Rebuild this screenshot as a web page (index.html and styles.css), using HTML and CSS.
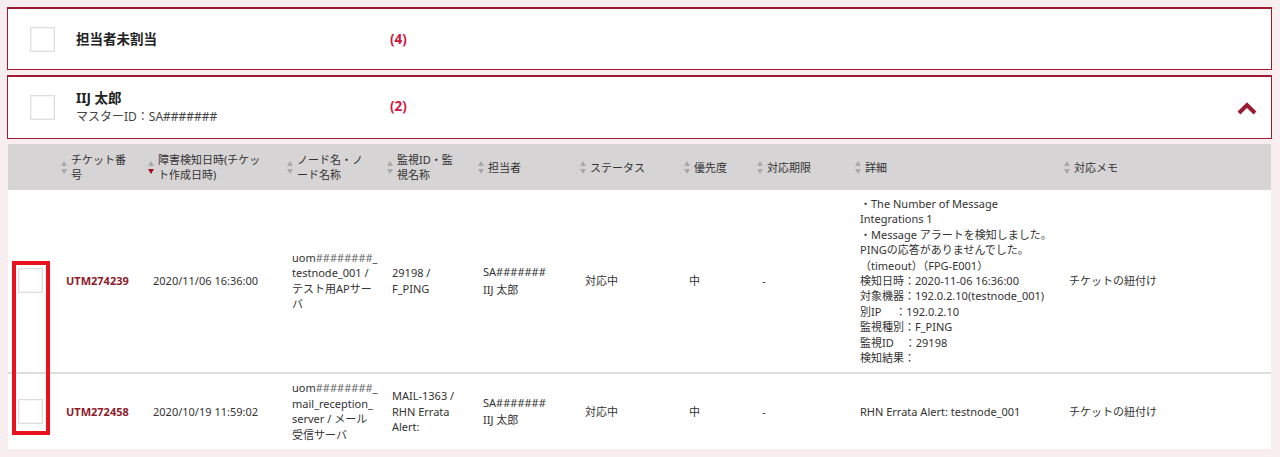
FILE: index.html
```html
<!DOCTYPE html>
<html lang="ja">
<head>
	<meta charset="UTF-8">
	<title>チケット一覧</title>
	<link rel="stylesheet" href="styles.css">
</head>
<body>
	<div class="page">
		<div class="group">
			<span class="check"></span>
			<div class="group-name"><b>担当者未割当</b></div>
			<span class="count">(4)</span>
		</div>
		<div class="group open">
			<span class="check"></span>
			<div class="group-name">
				<b>IIJ 太郎</b>
				<small>マスターID：SA#######</small>
			</div>
			<span class="count">(2)</span>
			<svg class="toggle" width="20" height="14" viewBox="0 0 20 14"><polyline points="2,12 10,4 18,12" fill="none" stroke="#9b1b30" stroke-width="4"/></svg>
		</div>

		<div class="list">
			<table class="tickets">
				<colgroup>
					<col style="width:53px"><col style="width:87px"><col style="width:139px"><col style="width:100px">
					<col style="width:91px"><col style="width:102px"><col style="width:104px"><col style="width:73px">
					<col style="width:98px"><col style="width:209px"><col style="width:207px">
				</colgroup>
				<thead>
					<tr>
						<th></th>
						<th><div class="th"><span class="sort"></span><span>チケット番<br>号</span></div></th>
						<th><div class="th"><span class="sort desc"></span><span>障害検知日時(チケッ<br>ト作成日時)</span></div></th>
						<th><div class="th"><span class="sort"></span><span>ノード名・ノ<br>ード名称</span></div></th>
						<th><div class="th"><span class="sort"></span><span>監視ID・監<br>視名称</span></div></th>
						<th><div class="th"><span class="sort"></span><span>担当者</span></div></th>
						<th><div class="th"><span class="sort"></span><span>ステータス</span></div></th>
						<th><div class="th"><span class="sort"></span><span>優先度</span></div></th>
						<th><div class="th"><span class="sort"></span><span>対応期限</span></div></th>
						<th><div class="th"><span class="sort"></span><span>詳細</span></div></th>
						<th><div class="th"><span class="sort"></span><span>対応メモ</span></div></th>
					</tr>
				</thead>
				<tbody>
					<tr>
						<td class="cb"><span class="check"></span></td>
						<td><a class="ticket-no">UTM274239</a></td>
						<td>2020/11/06 16:36:00</td>
						<td>uom<i>########</i>_<br>testnode_001 /<br>テスト用APサー<br>バ</td>
						<td>29198 /<br>F_PING</td>
						<td class="owner">SA#######<br>IIJ 太郎</td>
						<td>対応中</td>
						<td>中</td>
						<td>-</td>
						<td>・The Number of Message<br>Integrations 1<br>・Message アラートを検知しました。<br>PINGの応答がありませんでした。<br>（timeout）（FPG-E001）<br>検知日時：2020-11-06 16:36:00<br>対象機器：192.0.2.10(testnode_001)<br>別IP　 ：192.0.2.10<br>監視種別：F_PING<br>監視ID　：29198<br>検知結果：</td>
						<td>チケットの紐付け</td>
					</tr>
					<tr>
						<td class="cb"><span class="check"></span></td>
						<td><a class="ticket-no">UTM272458</a></td>
						<td>2020/10/19 11:59:02</td>
						<td>uom<i>########</i>_<br>mail_reception_<br>server / メール<br>受信サーバ</td>
						<td>MAIL-1363 /<br>RHN Errata<br>Alert:</td>
						<td class="owner">SA#######<br>IIJ 太郎</td>
						<td>対応中</td>
						<td>中</td>
						<td>-</td>
						<td>RHN Errata Alert: testnode_001</td>
						<td>チケットの紐付け</td>
					</tr>
				</tbody>
			</table>
			<div class="mark"></div>
		</div>
	</div>
</body>
</html>
```

FILE: styles.css
```css
html, body {margin: 0; padding: 0;}
body {background: #f8eef0; font-family: "Noto Sans", "Noto Sans CJK JP", sans-serif; color: #333; font-size: 11px;}
.page {padding: 7px 8px 0 7px;}

.group {display: flex; align-items: center; height: 60px; margin-bottom: 5px; padding: 0 14px 0 22px; background: #fff; border: 1px solid #9e1b34; border-top-width: 2px;}
.group.open {height: 61px;}
.check {display: block; width: 23px; height: 23px; border: 1px solid #dedede; background: #fff; box-shadow: inset 0 0 0 1px #f4f4f4;}
.group-name {width: 314px; margin-left: 21px; display: flex; flex-direction: column; color: #222;}
.group-name b {font-size: 13.5px; line-height: 18px;}
.group-name small {font-size: 12px; line-height: 20px; color: #444;}
.count {color: #d3163f; font-weight: bold; font-size: 13.5px;}
.open .count {margin-bottom: 3px;}
.toggle {margin-left: auto;}

.list {position: relative; margin: 0 0 0 1px;}
.tickets {width: 1263px; table-layout: fixed; border-collapse: collapse; background: #fff;}
.tickets th {height: 46px; padding: 0 6px 0 0; background: #d6d4d5; font-weight: normal; text-align: left; color: #333; line-height: 15px; white-space: nowrap;}
.th {display: flex; align-items: center;}
.sort {display: inline-block; width: 7px; height: 13px; margin-right: 3px; position: relative; flex: none;}
.sort:before, .sort:after {content: ""; position: absolute; left: 0; border-left: 3.5px solid transparent; border-right: 3.5px solid transparent;}
.sort:before {top: 0; border-bottom: 5px solid #a8a8a8;}
.sort:after {bottom: 0; border-top: 5px solid #a8a8a8;}
.sort.desc:after {border-top-color: #a50d1e;}

.tickets td {padding: 6px 4px 7px 5px; vertical-align: middle; line-height: 15.4px; white-space: nowrap;}
.tickets tbody tr + tr td {border-top: 2px solid #dedede;}
.tickets td.cb {padding-left: 10px;}
.tickets td.owner {line-height: 17.5px;}
.tickets i {font-style: normal; color: #666;}
.ticket-no {color: #8c1b2c; font-weight: bold;}

.mark {position: absolute; left: 4px; top: 117px; width: 30px; height: 166px; border: 4.5px solid #e8131f;}
```
